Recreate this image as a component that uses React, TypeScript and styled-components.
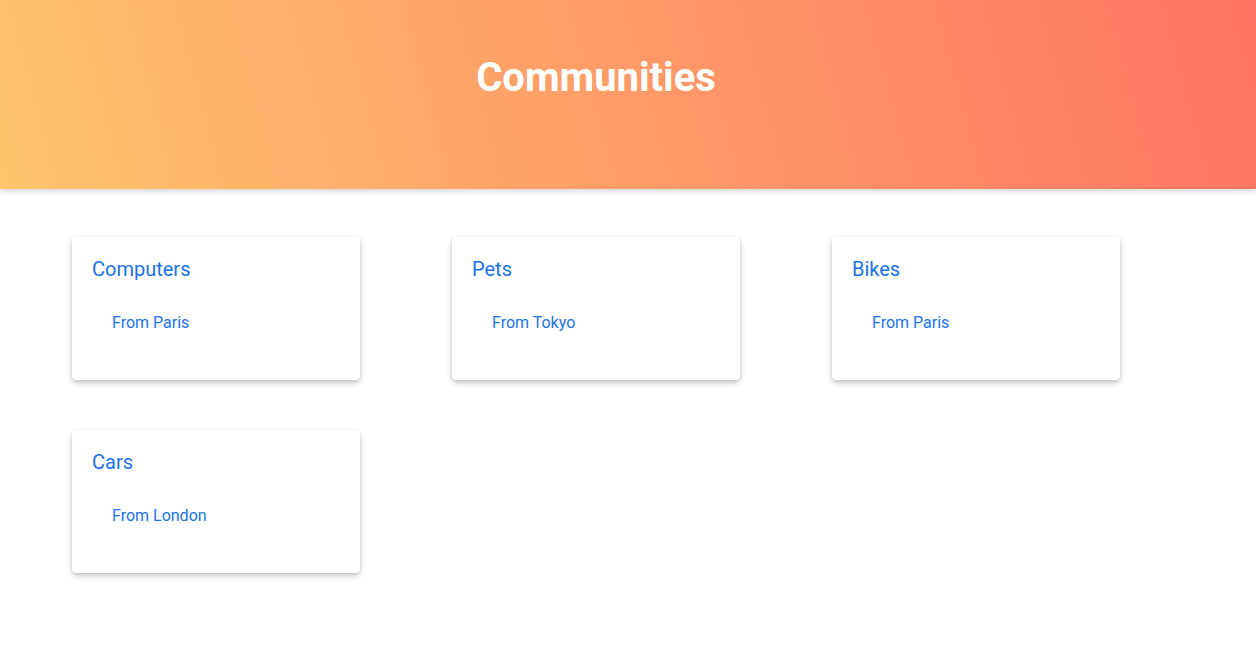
import React from "react";
import styled, { createGlobalStyle } from "styled-components";

const Global = createGlobalStyle`
  html, body { margin: 0; padding: 0; background: #fff; }
  body { font-family: Roboto, "Noto Sans", Arial, sans-serif; }
`;

const Header = styled.header`
  height: 189px;
  background: linear-gradient(75deg, #ffc46e 0%, #fe9f68 45%, #ff7462 100%);
  box-shadow: 0 2px 6px rgba(0, 0, 0, 0.18);
  display: flex;
  justify-content: center;
  padding-right: 64px;
  box-sizing: border-box;
`;

const Title = styled.h1`
  margin: 0;
  padding-top: 54px;
  color: #fff;
  font-size: 40px;
  font-weight: 700;
  line-height: 48px;
`;

const Grid = styled.main`
  display: grid;
  grid-template-columns: repeat(3, 288px);
  column-gap: 92px;
  row-gap: 50px;
  padding: 48px 72px;
`;

const Card = styled.div`
  height: 143px;
  background: #fff;
  border-radius: 4px;
  box-shadow: 0 3px 6px rgba(0, 0, 0, 0.2), 0 1px 3px rgba(0, 0, 0, 0.1);
  padding: 20px 20px 0 20px;
  box-sizing: border-box;
  color: #1a73e8;
`;

const CardTitle = styled.div`
  font-size: 20px;
  line-height: 24px;
`;

const CardSub = styled.div`
  font-size: 16px;
  line-height: 20px;
  margin-top: 32px;
  padding-left: 20px;
`;

const data = [
  { name: "Computers", city: "Paris" },
  { name: "Pets", city: "Tokyo" },
  { name: "Bikes", city: "Paris" },
  { name: "Cars", city: "London" },
];

export default function App() {
  return (
    <>
      <Global />
      <Header>
        <Title>Communities</Title>
      </Header>
      <Grid>
        {data.map((d) => (
          <Card key={d.name}>
            <CardTitle>{d.name}</CardTitle>
            <CardSub>From {d.city}</CardSub>
          </Card>
        ))}
      </Grid>
    </>
  );
}
